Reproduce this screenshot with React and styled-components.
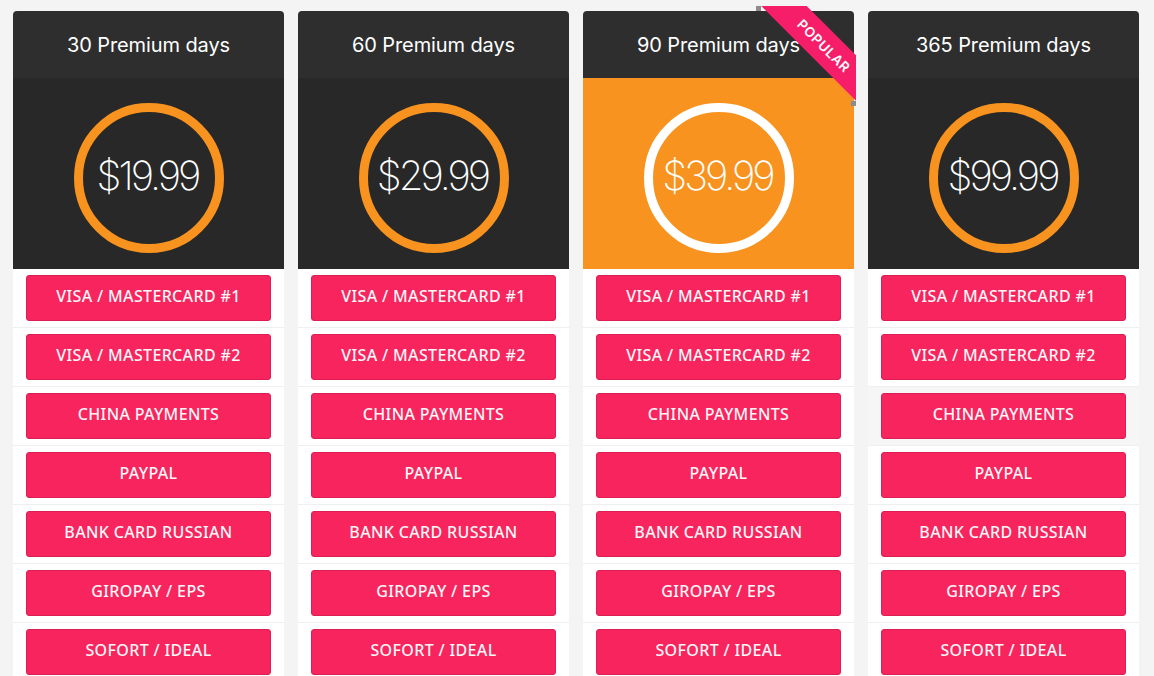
import React from "react";
import styled, { createGlobalStyle } from "styled-components";

const GlobalStyle = createGlobalStyle`
  html, body { margin: 0; padding: 0; background: #f4f4f4; }
  body { font-family: "Open Sans", "Liberation Sans", sans-serif; }
  * { box-sizing: border-box; }
`;

const Page = styled.div`
  display: grid;
  grid-template-columns: repeat(4, 271px);
  column-gap: 14px;
  padding: 11px 13px 0;
  height: 676px;
  overflow: hidden;
`;

const Card = styled.div`
  position: relative;
  background: #ffffff;
  border-radius: 4px 4px 0 0;
`;

const Header = styled.div`
  height: 67px;
  display: flex;
  align-items: center;
  justify-content: center;
  background: #2e2e2e;
  border-radius: 4px 4px 0 0;
  color: #ffffff;
  font-family: "Inter", "Lato", sans-serif;
  font-size: 20px;
  font-weight: 400;
  letter-spacing: -0.1px;
`;

const PriceArea = styled.div`
  height: 191px;
  padding: 25px 0 16px;
  display: flex;
  justify-content: center;
  background: ${(p) => (p.$featured ? "#f7931e" : "#282828")};
`;

const Circle = styled.div`
  width: 150px;
  height: 150px;
  border-radius: 50%;
  border: 9px solid ${(p) => (p.$featured ? "#ffffff" : "#f7931e")};
  display: flex;
  align-items: center;
  justify-content: center;
  color: #ffffff;
  font-family: "Inter", "Lato", sans-serif;
  font-weight: 200;
  font-size: 40px;
  letter-spacing: -3px;
  padding-bottom: 6px;
  padding-right: 2px;
`;

const Row = styled.div`
  padding: 6px 13px;
  border-bottom: 1px solid #efefef;
  background: ${(p) => (p.$hover ? "#f6f6f6" : "#ffffff")};
`;

const PayButton = styled.button`
  display: flex;
  align-items: center;
  justify-content: center;
  width: 100%;
  height: 46px;
  margin: 0;
  padding: 0 0 4px;
  background: #f7245d;
  border: 1px solid #db1f52;
  border-radius: 3px;
  color: #fff6f8;
  font-family: "Noto Sans", "Open Sans", sans-serif;
  font-size: 16px;
  font-weight: 500;
  text-transform: uppercase;
  letter-spacing: 0.35px;
  cursor: pointer;
`;

const RibbonWrap = styled.div`
  position: absolute;
  top: -5px;
  right: -2px;
  width: 100px;
  height: 100px;
  overflow: hidden;
  z-index: 2;

  &::before,
  &::after {
    content: "";
    position: absolute;
    width: 5px;
    height: 5px;
    background: #8c8c8c;
  }
  &::before { top: 0; left: 0; }
  &::after { bottom: 0; right: 0; }
`;

const RibbonBand = styled.span`
  position: absolute;
  left: -10px;
  top: 21px;
  width: 150px;
  height: 32px;
  z-index: 1;
  display: flex;
  align-items: center;
  justify-content: center;
  background: #f71e69;
  color: #ffffff;
  transform: rotate(45deg);
  font-family: "Inter", "Lato", sans-serif;
  font-weight: 600;
  font-size: 13.5px;
  letter-spacing: 0.6px;
  padding-left: 8px;
`;

const methods = [
  "VISA / MASTERCARD #1",
  "VISA / MASTERCARD #2",
  "CHINA PAYMENTS",
  "PAYPAL",
  "BANK CARD RUSSIAN",
  "GIROPAY / EPS",
  "SOFORT / IDEAL",
];

const plans = [
  { title: "30 Premium days", price: "$19.99" },
  { title: "60 Premium days", price: "$29.99" },
  { title: "90 Premium days", price: "$39.99", featured: true },
  { title: "365 Premium days", price: "$99.99", hoverRow: 2 },
];

export default function App() {
  return (
    <>
      <GlobalStyle />
      <Page>
        {plans.map((plan) => (
          <Card key={plan.title}>
            {plan.featured && (
              <RibbonWrap>
                <RibbonBand>POPULAR</RibbonBand>
              </RibbonWrap>
            )}
            <Header>{plan.title}</Header>
            <PriceArea $featured={plan.featured}>
              <Circle $featured={plan.featured}>{plan.price}</Circle>
            </PriceArea>
            {methods.map((m, i) => (
              <Row key={m} $hover={plan.hoverRow === i}>
                <PayButton>{m}</PayButton>
              </Row>
            ))}
          </Card>
        ))}
      </Page>
    </>
  );
}
